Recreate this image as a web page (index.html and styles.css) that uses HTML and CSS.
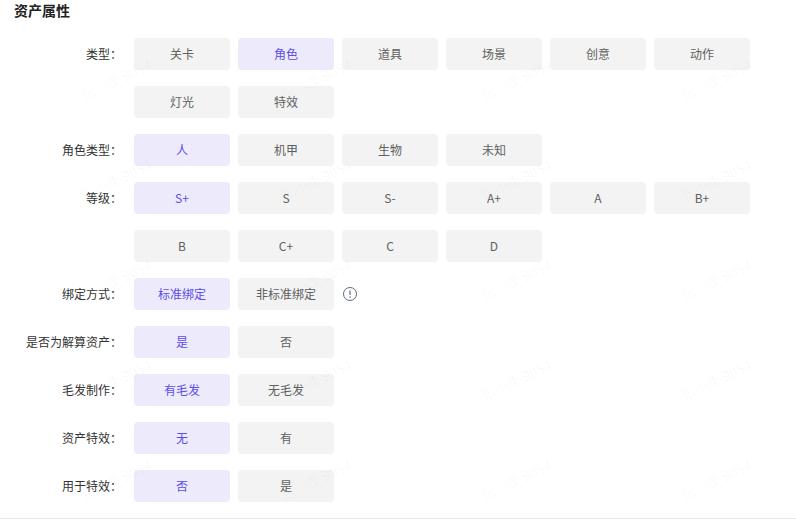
FILE: index.html
```html
<!DOCTYPE html>
<html lang="zh-CN">
<head>
<meta charset="utf-8">
<title>资产属性</title>
<link rel="stylesheet" href="styles.css">
</head>
<body>
<main class="panel">
  <h2 class="title">资产属性</h2>
  <div class="form">
    <div class="row"><div class="label">类型：</div><div class="options">
      <button class="opt">关卡</button><button class="opt on">角色</button><button class="opt">道具</button><button class="opt">场景</button><button class="opt">创意</button><button class="opt">动作</button><button class="opt">灯光</button><button class="opt">特效</button>
    </div></div>
    <div class="row"><div class="label">角色类型：</div><div class="options">
      <button class="opt on">人</button><button class="opt">机甲</button><button class="opt">生物</button><button class="opt">未知</button>
    </div></div>
    <div class="row"><div class="label">等级：</div><div class="options">
      <button class="opt on">S+</button><button class="opt">S</button><button class="opt">S-</button><button class="opt">A+</button><button class="opt">A</button><button class="opt">B+</button><button class="opt">B</button><button class="opt">C+</button><button class="opt">C</button><button class="opt">D</button>
    </div></div>
    <div class="row"><div class="label">绑定方式：</div><div class="options">
      <button class="opt on">标准绑定</button><button class="opt">非标准绑定</button>
      <svg class="info" width="16" height="16" viewBox="0 0 16 16" aria-hidden="true"><circle cx="8" cy="8" r="6.5" fill="none" stroke="#5f6b7a" stroke-width="1"/><path d="M8 4.4v4.6" fill="none" stroke="#5f6b7a" stroke-width="1.2"/><circle cx="8" cy="11" r=".8" fill="#5f6b7a"/></svg>
    </div></div>
    <div class="row"><div class="label">是否为解算资产：</div><div class="options">
      <button class="opt on">是</button><button class="opt">否</button>
    </div></div>
    <div class="row"><div class="label">毛发制作：</div><div class="options">
      <button class="opt on">有毛发</button><button class="opt">无毛发</button>
    </div></div>
    <div class="row"><div class="label">资产特效：</div><div class="options">
      <button class="opt on">无</button><button class="opt">有</button>
    </div></div>
    <div class="row"><div class="label">用于特效：</div><div class="options">
      <button class="opt on">否</button><button class="opt">是</button>
    </div></div>
  </div>
</main>
<div class="watermarks" aria-hidden="true">
  <span>张小康 9054</span><span>张小康 9054</span><span>张小康 9054</span><span>张小康 9054</span>
  <span>张小康 9054</span><span>张小康 9054</span><span>张小康 9054</span><span>张小康 9054</span>
  <span>张小康 9054</span><span>张小康 9054</span><span>张小康 9054</span><span>张小康 9054</span>
  <span>张小康 9054</span><span>张小康 9054</span><span>张小康 9054</span><span>张小康 9054</span>
  <span>张小康 9054</span><span>张小康 9054</span><span>张小康 9054</span><span>张小康 9054</span>
</div>
</body>
</html>
```
FILE: styles.css
```css
* { box-sizing: border-box; }
html, body { margin: 0; height: 519px; overflow: hidden; background: #fff; }
body { font-family: "Noto Sans CJK SC", "Liberation Sans", sans-serif; font-size: 12px; color: #333; position: relative; }
.panel { height: 519px; border-bottom: 1px solid #e8e8e8; padding: 0 0 0 14px; }
.title { margin: 0; height: 38px; padding-top: 1px; font-size: 14px; line-height: 18px; font-weight: 600; color: #222; }
.form { display: flex; flex-direction: column; gap: 16px; }
.row { display: flex; align-items: flex-start; }
.label { width: 108px; margin-right: 12px; line-height: 32px; text-align: right; color: #333; white-space: nowrap; }
.options { display: flex; flex-wrap: wrap; align-items: center; gap: 16px 8px; width: 624px; }
.opt { width: 96px; height: 32px; padding: 0; border: 0; border-radius: 4px; background: #f3f3f3; color: #5f5f5f; font: inherit; line-height: 32px; text-align: center; }
.opt.on { background: #edebfb; color: #5b4de8; }
.info { display: block; }
.watermarks { position: absolute; left: 0; top: 0; width: 796px; height: 519px; overflow: hidden; padding: 63px 0 0 78px; display: grid; grid-template-columns: 200px 200px 200px 118px; grid-auto-rows: 35px; row-gap: 65px; pointer-events: none; }
.watermarks span { display: block; width: 80px; height: 35px; line-height: 35px; white-space: nowrap; font-size: 14px; color: rgba(0, 0, 0, .035); transform: rotate(-25deg); transform-origin: 37px 17px; }
```
